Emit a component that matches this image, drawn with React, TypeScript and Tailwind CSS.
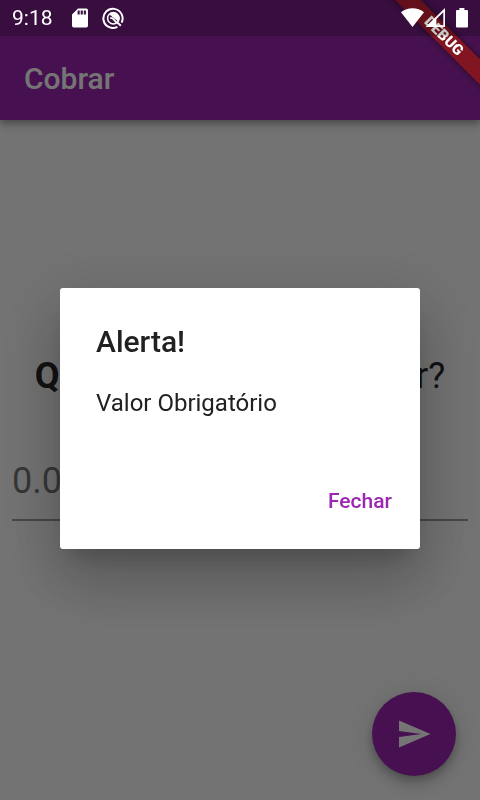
import React from "react";
import { MdSend } from "react-icons/md";

function StatusBar() {
  return (
    <div className="fixed inset-x-0 top-0 z-40 flex h-9 items-center bg-black/22 pl-3 pr-3 text-white">
      <span className="w-[60px] text-[21px] leading-6">9:18</span>
      <svg className="h-5 w-4" viewBox="0 0 16 20" fill="currentColor" aria-hidden="true">
        <path
          fillRule="evenodd"
          d="M6 .5h8.2a1.8 1.8 0 0 1 1.8 1.8v15.4a1.8 1.8 0 0 1-1.8 1.8H1.8A1.8 1.8 0 0 1 0 17.7V6.5zM5.6 2.6v4h2.1v-4zM8.7 2.6v4h2.1v-4zM11.8 2.6v4h2.1v-4z"
        />
      </svg>
      <svg className="ml-[14px] h-[22px] w-[22px]" viewBox="0 0 22 22" fill="none" stroke="currentColor" aria-hidden="true">
        <path d="M15.4 19.9A9.6 9.6 0 1 1 19.6 15.6" strokeWidth="2" />
        <circle cx="11.3" cy="11.3" r="5.7" strokeWidth="1.5" />
        <path d="M7.6 7.2A5.7 5.7 0 0 1 16.4 14.2z" fill="currentColor" strokeWidth=".8" />
        <path d="M8.2 10.8L10.6 11.4L14.6 15.6" strokeWidth="1.8" />
        <path d="M15 15.2L18.8 18.8" strokeWidth="2" />
      </svg>
      <svg className="ml-auto h-5 w-[23px]" viewBox="0 0 23 20" fill="currentColor" aria-hidden="true">
        <path d="M0 4.2C6.4-1 16.6-1 23 4.2L11.5 19z" />
      </svg>
      <svg className="ml-[1px] h-5 w-5" viewBox="0 0 20 20" aria-hidden="true">
        <path fill="currentColor" fillRule="evenodd" d="M20 0V19H.6zM18.3 4.2L11.4 11V17.3H18.3z" />
      </svg>
      <svg className="ml-[11px] h-5 w-3" viewBox="0 0 12 20" fill="currentColor" aria-hidden="true">
        <path d="M3.4 0h5v2H11a1 1 0 0 1 1 1v15.5a1 1 0 0 1-1 1H1a1 1 0 0 1-1-1V3a1 1 0 0 1 1-1h2.4z" />
      </svg>
    </div>
  );
}

function DebugBanner() {
  return (
    <div className="pointer-events-none fixed right-0 top-0 z-30 h-[120px] w-[120px] overflow-hidden">
      <div className="absolute -right-[54px] top-[27px] w-[180px] rotate-45 bg-black/50 shadow-[0_0_9px_rgba(0,0,0,0.5)]">
        <div className="flex h-[18px] items-center justify-center bg-[#b71c1c]/63 text-[15px] font-black leading-none text-white">
          DEBUG
        </div>
      </div>
    </div>
  );
}

function AlertDialog() {
  return (
    <div className="fixed inset-0 z-20 flex items-center justify-center bg-black/54 px-[60px] pt-9">
      <div
        role="alertdialog"
        aria-modal="true"
        aria-labelledby="alert-title"
        aria-describedby="alert-text"
        className="w-full rounded-[3px] bg-white text-[#212121] shadow-[0_16px_22px_-10px_rgba(0,0,0,0.2),0_36px_57px_4px_rgba(0,0,0,0.14),0_14px_69px_12px_rgba(0,0,0,0.12)]"
      >
        <h2 id="alert-title" className="px-9 pt-9 text-[30px] font-medium leading-9">
          Alerta!
        </h2>
        <p id="alert-text" className="px-9 pb-12 pt-7 text-2xl leading-[30px]">
          Valor Obrigatório
        </p>
        <div className="flex justify-end px-3 pb-[11px]">
          <button type="button" className="h-[72px] px-4 text-[21px] font-medium text-[#9c27b0]">
            Fechar
          </button>
        </div>
      </div>
    </div>
  );
}

export default function App() {
  return (
    <div className="flex min-h-screen flex-col bg-[#fafafa] font-[Roboto,sans-serif]">
      <header className="relative bg-[#9c27b0] pt-9 shadow-[0_3px_6px_-1px_rgba(0,0,0,0.2),0_6px_8px_rgba(0,0,0,0.14),0_1px_15px_rgba(0,0,0,0.12)]">
        <h1 className="flex h-[84px] items-center px-6 text-[30px] font-medium text-white">Cobrar</h1>
      </header>
      <main className="flex flex-1 flex-col justify-center px-3 pb-11">
        <label htmlFor="amount" className="whitespace-nowrap text-center text-4xl leading-[42px] text-black/87">
          <b className="font-bold">Quanto</b> você quer cobrar?
        </label>
        <input
          id="amount"
          type="text"
          inputMode="decimal"
          placeholder="0.00"
          className="mt-[46px] h-[78px] w-full border-b-2 border-black/38 bg-transparent text-4xl outline-none placeholder:text-black/54"
        />
      </main>
      <button
        type="button"
        aria-label="Enviar"
        className="fixed bottom-6 right-6 z-10 flex h-[84px] w-[84px] items-center justify-center rounded-full bg-[#9c27b0] text-white shadow-[0_4px_8px_-1px_rgba(0,0,0,0.2),0_9px_15px_rgba(0,0,0,0.14),0_2px_27px_rgba(0,0,0,0.12)]"
      >
        <MdSend className="h-9 w-9" />
      </button>
      <AlertDialog />
      <DebugBanner />
      <StatusBar />
    </div>
  );
}
